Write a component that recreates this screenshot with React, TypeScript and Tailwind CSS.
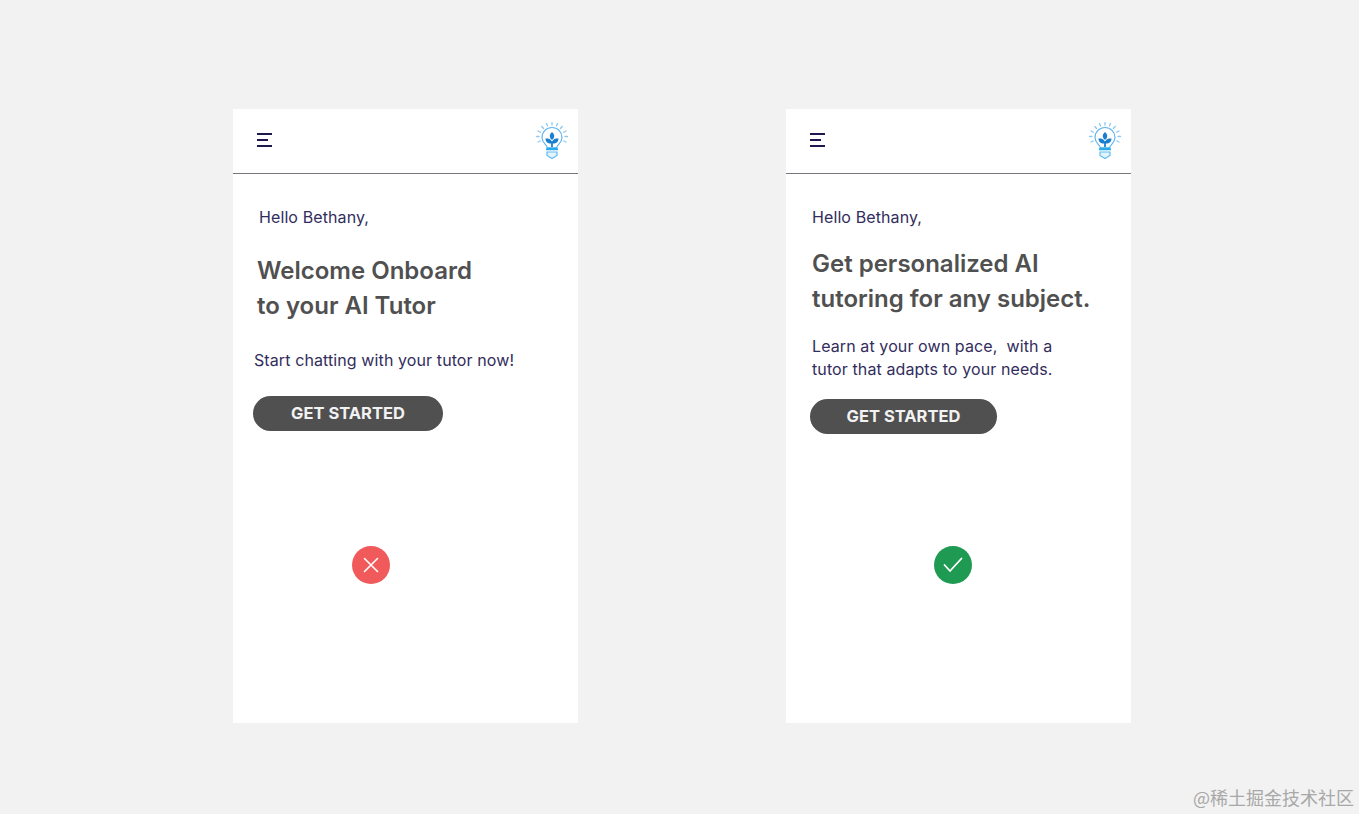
const font = { fontFamily: '"Inter", "Liberation Sans", sans-serif' };

const BulbLogo: React.FC = () => {
  return (
    <svg width="34" height="40" viewBox="0 0 34 40" fill="none">
      <g stroke="#8cc8f2" strokeWidth="1.300" strokeLinecap="round">
        <path d="M17 0.500v2.500M11.500 1.500l1 2.300M22.500 1.500l-1 2.300M6.800 4.500l1.800 2M27.200 4.500l-1.800 2M3 9l2.400 1.300M31 9l-2.400 1.300M1.500 14.500h2.500M30 14.500h2.500M3 20l2.200-1M31 20l-2.200-1" />
      </g>
      <path d="M12.500 26c0-3-5.500-4.500-5.500-10.500a10 10 0 0 1 20 0c0 6-5.500 7.500-5.500 10.500z" stroke="#5fb4f0" strokeWidth="1.200" />
      <path d="M17 25v-6" stroke="#1b7fd0" strokeWidth="1.800" />
      <path d="M17 21.500c-4 .5-6.500-1.500-6.500-5 4-.5 6.500 1.500 6.500 5zM17 21.500c4 .5 6.500-1.500 6.500-5-4-.5-6.500 1.500-6.500 5zM17 18c-3-2.300-3-5.500 0-8 3 2.500 3 5.700 0 8z" fill="#1b7fd0" />
      <path d="M11.500 25.500h11l.6 2.800H10.900z" fill="#29a9ee" />
      <path d="M12 30h10v3.500l-5 3-5-3z" stroke="#5fbcf2" strokeWidth="1.200" fill="#e4f4fd" />
    </svg>
  );
};

const PhoneHeader: React.FC = () => {
  return (
    <header className="flex h-[65px] items-center justify-between border-b border-[#77777f] pl-6 pr-[9px]">
      <div className="mb-0.5 flex w-[15px] flex-col gap-1">
        <span className="h-0.5 w-[15px] bg-[#1f1a4d]" />
        <span className="h-0.5 w-[11px] bg-[#1f1a4d]" />
        <span className="h-0.5 w-[15px] bg-[#1f1a4d]" />
      </div>
      <div className="mt-0.5"><BulbLogo /></div>
    </header>
  );
};

const GetStarted: React.FC<{ width: string }> = ({ width }) => {
  return (
    <button className={`flex h-[35px] items-center justify-center rounded-[18px] bg-[#505050] text-[16.500px] font-bold text-[#f2f2f2] ${width}`}>
      GET STARTED
    </button>
  );
};

export default function App() {
  return (
    <div className="relative flex min-h-[814px] gap-[208px] bg-[#f2f2f2] pl-[233px] pt-[109px]" style={font}>
      <section className="h-[614px] w-[345px] bg-white">
        <PhoneHeader />
        <p className="ml-[26px] mt-[33px] text-[16px] leading-5 tracking-[0.1px] text-[#322d5c]">Hello Bethany,</p>
        <h1 className="ml-6 mt-[26px] text-[24px] font-semibold leading-[35px] text-[#505050]">
          Welcome Onboard<br />to your AI Tutor
        </h1>
        <p className="ml-[21px] mt-[27px] text-[16px] leading-5 tracking-[0.1px] text-[#322d5c]">Start chatting with your tutor now!</p>
        <div className="ml-5 mt-[26px]"><GetStarted width="w-[190px]" /></div>
        <div className="ml-[119px] mt-[115px] flex h-[38px] w-[38px] items-center justify-center rounded-full bg-[#f05a5a]">
          <svg width="18" height="18" viewBox="0 0 18 18" fill="none" stroke="#fff" strokeWidth="1.600" strokeLinecap="round">
            <path d="M2.500 2.500l13 13M15.500 2.500l-13 13" />
          </svg>
        </div>
      </section>

      <section className="h-[614px] w-[345px] bg-white">
        <PhoneHeader />
        <p className="ml-[26px] mt-[33px] text-[16px] leading-5 tracking-[0.1px] text-[#322d5c]">Hello Bethany,</p>
        <h1 className="ml-[26px] mt-[19px] text-[24px] font-semibold leading-[35px] text-[#505050]">
          Get personalized AI<br />tutoring for any subject.
        </h1>
        <p className="ml-[26px] mt-[19px] text-[16px] leading-[23px] tracking-[0.1px] text-[#322d5c]">
          Learn at your own pace,&nbsp; with a<br />tutor that adapts to your needs.
        </p>
        <div className="ml-6 mt-[18px]"><GetStarted width="w-[187px]" /></div>
        <div className="ml-[148px] mt-[112px] flex h-[38px] w-[38px] items-center justify-center rounded-full bg-[#1f9a52]">
          <svg width="24" height="20" viewBox="0 0 24 20" fill="none" stroke="#fff" strokeWidth="1.800" strokeLinecap="round" strokeLinejoin="round">
            <path d="M3.500 10l5.500 6L20.500 3.500" />
          </svg>
        </div>
      </section>

      <span className="absolute bottom-[5px] right-[5px] text-[18px] leading-6 text-[#a8a8a8]" style={{ fontFamily: '"Noto Sans CJK SC", sans-serif' }}>
        @稀土掘金技术社区
      </span>
    </div>
  );
}
